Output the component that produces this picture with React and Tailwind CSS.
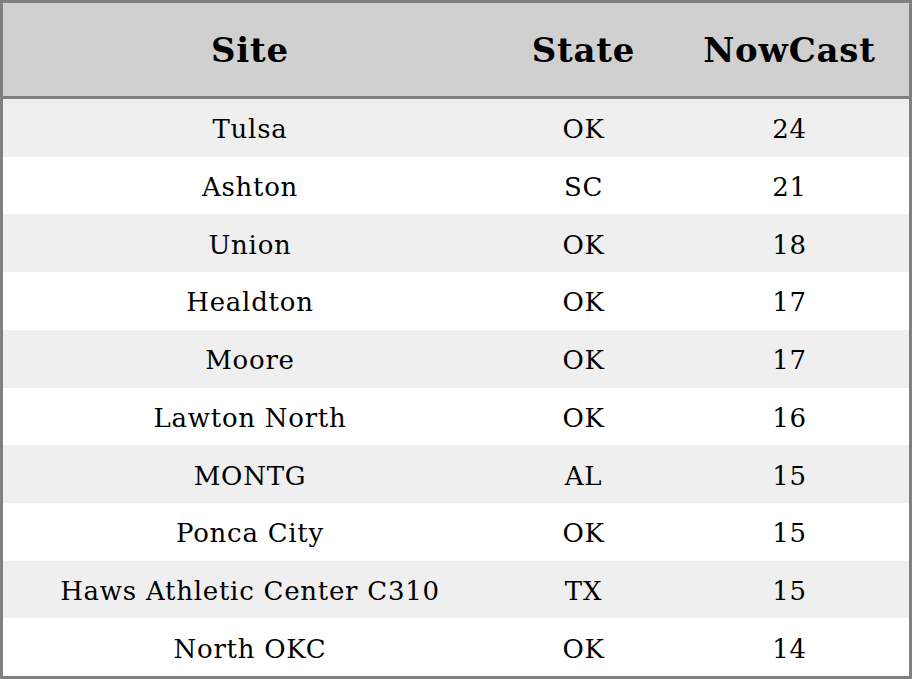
const rows = [
  ["Tulsa", "OK", "24"],
  ["Ashton", "SC", "21"],
  ["Union", "OK", "18"],
  ["Healdton", "OK", "17"],
  ["Moore", "OK", "17"],
  ["Lawton North", "OK", "16"],
  ["MONTG", "AL", "15"],
  ["Ponca City", "OK", "15"],
  ["Haws Athletic Center C310", "TX", "15"],
  ["North OKC", "OK", "14"],
];

export default function App() {
  return (
    <div className="w-[912px] h-[679px] bg-white border-[3px] border-[#808080] flex flex-col text-black font-['DejaVu_Serif',serif]">
      <div className="grid grid-cols-[494px_173px_239px] h-[96px] shrink-0 pt-[2px] bg-[#d0d0d0] border-b-[3px] border-[#808080] items-center text-center text-[34px] font-bold tracking-[0.8px]">
        <div>Site</div>
        <div>State</div>
        <div>NowCast</div>
      </div>
      <div className="flex-1 flex flex-col">
        {rows.map((r, i) => (
          <div
            key={i}
            className={`grid grid-cols-[494px_173px_239px] flex-1 pt-[4px] items-center text-center text-[26px] tracking-[0.75px] ${i % 2 === 0 ? "bg-[#efefef]" : "bg-white"}`}
          >
            <div>{r[0]}</div>
            <div>{r[1]}</div>
            <div>{r[2]}</div>
          </div>
        ))}
      </div>
    </div>
  );
}
